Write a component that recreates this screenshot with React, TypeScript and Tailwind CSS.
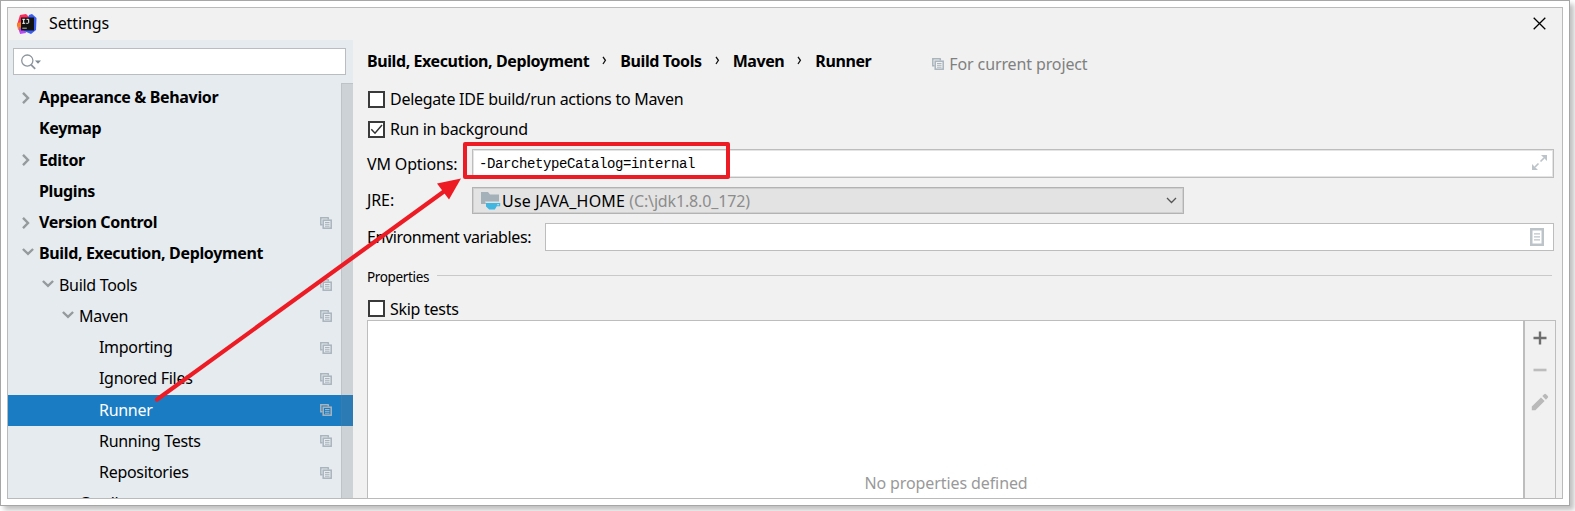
import React from "react";

const CopyIcon = ({ className = "" }: { className?: string }) => (
  <svg width="12" height="12" viewBox="0 0 12 12" className={`shrink-0 ${className}`}>
    <path d="M.8 8.4V.8h8M.8 7.8h1.7M8.3.8v1.7" fill="none" stroke="#a9b4bc" strokeWidth="1.5" />
    <rect x="3.2" y="3.2" width="8" height="8" fill="none" stroke="#a9b4bc" strokeWidth="1.5" />
    <path d="M5 5.5h4.5M5 7.3h4.5M5 9.2h4.5" stroke="#a9b4bc" strokeWidth="1" />
  </svg>
);

const Chevron = ({ open }: { open: boolean }) =>
  open ? (
    <svg width="12" height="8" viewBox="0 0 12 8" className="-mt-1">
      <path d="M.9 1l5.1 4.9L11.1 1" fill="none" stroke="#959a9d" strokeWidth="2.4" />
    </svg>
  ) : (
    <svg width="8" height="12" viewBox="0 0 8 12" className="-mt-px">
      <path d="M1 .9L6 6l-5 5.1" fill="none" stroke="#959a9d" strokeWidth="2.4" />
    </svg>
  );

type Row = { label: string; pad: string; bold?: boolean; open?: boolean; icon?: boolean; selected?: boolean };

const rows: Row[] = [
  { label: "Appearance & Behavior", pad: "pl-[14px]", bold: true, open: false },
  { label: "Keymap", pad: "pl-[14px]", bold: true },
  { label: "Editor", pad: "pl-[14px]", bold: true, open: false },
  { label: "Plugins", pad: "pl-[14px]", bold: true },
  { label: "Version Control", pad: "pl-[14px]", bold: true, open: false, icon: true },
  { label: "Build, Execution, Deployment", pad: "pl-[14px]", bold: true, open: true },
  { label: "Build Tools", pad: "pl-[34px]", open: true, icon: true },
  { label: "Maven", pad: "pl-[54px]", open: true, icon: true },
  { label: "Importing", pad: "pl-[74px]", icon: true },
  { label: "Ignored Files", pad: "pl-[74px]", icon: true },
  { label: "Runner", pad: "pl-[74px]", icon: true, selected: true },
  { label: "Running Tests", pad: "pl-[74px]", icon: true },
  { label: "Repositories", pad: "pl-[74px]", icon: true },
  { label: "Gradle", pad: "pl-[54px]", icon: true },
];

const Checkbox = ({ checked, label }: { checked?: boolean; label: string }) => (
  <label className="flex items-center gap-[5px] tracking-[-0.28px]">
    <span className="h-[17px] w-[17px] border-2 border-[#3a3a3a] bg-white">
      {checked && (
        <svg width="13" height="13" viewBox="0 0 13 13">
          <path d="M1.3 6.3l3.7 3.9 7-8.2" fill="none" stroke="#333" strokeWidth="1.5" />
        </svg>
      )}
    </span>
    <span>{label}</span>
  </label>
);

const Logo = () => (
  <svg width="20" height="20" viewBox="0 0 20 20">
    <path d="M3 1l6-1 4 4-2 11-8 4-3-8z" fill="#fc2d5d" />
    <path d="M0 9l5-1v6l-4 2z" fill="#fc801d" />
    <path d="M2 13l6 2 1 4-6 1z" fill="#b74af7" />
    <path d="M12 1l3-1 4.5 4-.5 12-5 4-7-3z" fill="#3b5cf0" />
    <rect x="4" y="3.5" width="13" height="13" fill="#111" />
    <path d="M5.3 5.3h2.9M6.7 5.3v4M5.3 9.3h2.9M9.5 5.3h2.2v3.2q0 .8-.9.8H9.3" fill="none" stroke="#fff" strokeWidth="1" />
    <path d="M5.3 14.2h4.5" stroke="#bbb" strokeWidth="1" />
  </svg>
);

const Sep = () => (
  <span className="mx-[13px] flex w-[5px]">
    <svg width="5" height="9" viewBox="0 0 5 9">
      <path d="M1 .8l2.4 3.5L1 8" fill="none" stroke="#111" strokeWidth="1.3" />
    </svg>
  </span>
);

export default function App() {
  return (
    <div className="relative h-[511px] w-[1575px] overflow-hidden bg-white font-['Noto_Sans',sans-serif] text-[16px] leading-5 text-black">
      <div className="h-[506px] w-[1570px] border border-[#a6a6a6] bg-white p-[6px] shadow-[4px_4px_5px_rgba(0,0,0,0.25)]">
        <div className="flex h-full flex-col overflow-hidden border border-[#bababa] bg-[#f1f1f1]">
          <header className="flex h-8 shrink-0 items-center pl-[9px] pr-4">
            <Logo />
            <h1 className="-mt-0.5 ml-3 flex-1 tracking-[-0.1px]">Settings</h1>
            <svg width="13" height="13" viewBox="0 0 13 13" className="-mt-0.5">
              <path d="M.7.7l11.6 11.6M12.3.7L.7 12.3" stroke="#000" strokeWidth="1.3" />
            </svg>
          </header>
          <div className="flex min-h-0 flex-1">
            <aside className="flex w-[345px] shrink-0 flex-col bg-[#e6ebef]">
              <div className="ml-[5px] mt-2 flex h-[27px] w-[333px] shrink-0 items-center border border-[#b9bdc0] bg-white pl-[7px]">
                <svg width="20" height="16" viewBox="0 0 20 16">
                  <circle cx="6.3" cy="6.6" r="5.6" fill="none" stroke="#8b959b" strokeWidth="1.3" />
                  <path d="M10.2 10.8l4 4" stroke="#8b959b" strokeWidth="1.8" />
                  <path d="M14 6.5h6l-3 3.2z" fill="#7f8b91" />
                </svg>
              </div>
              <div className="relative mt-[7.5px] min-h-0 flex-1 overflow-hidden">
                {rows.map((r) => (
                  <div
                    key={r.label}
                    className={`flex h-[31.25px] items-center ${r.pad} ${r.selected ? "bg-[#1a7dc4] text-white" : ""} ${r.bold ? "font-bold tracking-[-0.35px]" : "tracking-[-0.3px]"}`}
                  >
                    <span className="flex w-[17px] shrink-0">{r.open !== undefined && <Chevron open={r.open} />}</span>
                    <span className="-mt-0.5 flex-1 whitespace-nowrap">{r.label}</span>
                    {r.icon && <CopyIcon className="-mt-px mr-[21px]" />}
                  </div>
                ))}
                <div className="absolute right-0 top-[.5px] h-full w-3 border-l border-t border-[#80848a30] bg-[#73757c36]" />
              </div>
            </aside>
            <main className="flex min-w-0 flex-1 flex-col pl-[14px] pr-[6px]">
              <div className="-mt-px flex h-[43px] shrink-0 items-center font-bold tracking-[-0.41px]">
                <span>Build, Execution, Deployment</span>
                <Sep />
                <span>Build Tools</span>
                <Sep />
                <span>Maven</span>
                <Sep />
                <span>Runner</span>
                <span className="ml-[61px] mt-[7px] flex items-center gap-[5px] font-normal tracking-[-0.12px] text-[#808080]">
                  <CopyIcon />
                  <span>For current project</span>
                </span>
              </div>
              <div className="flex h-[34px] shrink-0 items-center pl-px">
                <Checkbox label="Delegate IDE build/run actions to Maven" />
              </div>
              <div className="flex h-[26px] shrink-0 items-center pl-px">
                <Checkbox checked label="Run in background" />
              </div>
              <div className="mt-[7px] flex h-[29px] shrink-0 items-center pr-0.5">
                <span className="w-[105px] tracking-[-0.15px]">VM Options:</span>
                <div className="flex h-[29px] flex-1 items-center justify-between border border-[#bdbdbd] bg-white px-[6px] shadow-[inset_0_0_0_1px_#e4e4e4]">
                  <span className="font-['Liberation_Mono',monospace] text-[14px] tracking-[-0.4px]">-DarchetypeCatalog=internal</span>
                  <svg width="15" height="15" viewBox="0 0 15 15" className="-mt-0.5">
                    <path d="M9 0h6v6zM0 9v6h6z" fill="#bcc4c9" />
                    <path d="M12 3L8.5 6.5M3 12l3.5-3.5" stroke="#bcc4c9" strokeWidth="1.7" />
                  </svg>
                </div>
              </div>
              <div className="mt-[9px] flex h-[27px] shrink-0 items-center">
                <span className="-mt-0.5 w-[105px] tracking-[-0.1px]">JRE:</span>
                <div className="flex h-[27px] w-[712px] items-center border border-[#b3b3b3] bg-[#e3e3e3] pl-2 pr-[6px] shadow-[inset_0_0_0_1px_#d0d0d0]">
                  <svg width="20" height="18" viewBox="0 0 20 18">
                    <path d="M0 0h7l2 2.5h9V12H0z" fill="#a4b1b9" />
                    <path d="M4 9.5h15.5V15L16 18H8z" fill="#e3e3e3" />
                    <path d="M5 11h14.2v3.2h-3.4l-2 3.3H8.2L5 14.5z" fill="#40b6e0" />
                    <path d="M16.2 12.2h1.8v1h-1.8z" fill="#e3e3e3" />
                  </svg>
                  <span className="ml-px flex-1">
                    <span className="tracking-[0.2px]">Use JAVA_HOME</span>{" "}
                    <span className="tracking-[-0.15px] text-[#8c8c8c]">(C:\jdk1.8.0_172)</span>
                  </span>
                  <svg width="11" height="7" viewBox="0 0 11 7">
                    <path d="M1 1l4.5 4.5L10 1" fill="none" stroke="#555" strokeWidth="1.3" />
                  </svg>
                </div>
              </div>
              <div className="mt-[9px] flex h-[28px] shrink-0 items-center pr-0.5">
                <span className="w-[178px] tracking-[-0.38px]">Environment variables:</span>
                <div className="flex h-[28px] flex-1 items-center justify-end border border-[#bdbdbd] bg-white pr-[9px]">
                  <svg width="14" height="18" viewBox="0 0 14 18">
                    <rect x="1.25" y="1.25" width="11.5" height="15.5" fill="none" stroke="#bcc4c9" strokeWidth="2.5" />
                    <path d="M4 5.8h6M4 8.8h6M4 11.8h6" stroke="#bcc4c9" strokeWidth="1.2" />
                  </svg>
                </div>
              </div>
              <div className="mt-[12px] flex h-6 shrink-0 items-center gap-2 pr-1 text-[13.5px] tracking-[-0.35px]">
                <span className="mt-1">Properties</span>
                <div className="h-px flex-1 bg-[#c9c9c9]" />
              </div>
              <div className="mt-[10px] flex h-[23px] shrink-0 items-center pl-px">
                <Checkbox label="Skip tests" />
              </div>
              <div className="flex min-h-0 w-[1189px] flex-1 border-x border-t border-[#bdbdbd]">
                <div className="flex flex-1 flex-col items-center bg-white pt-[152px] text-[#999]">
                  <span className="ml-px tracking-[-0.1px]">No properties defined</span>
                </div>
                <div className="flex w-8 flex-col items-center border-l-2 border-[#bdbdbd] pt-[10px]">
                  <svg width="14" height="14" viewBox="0 0 14 14">
                    <path d="M7 .5v13M.5 7h13" stroke="#6e6e6e" strokeWidth="2.4" />
                  </svg>
                  <svg width="14" height="14" viewBox="0 0 14 14" className="mt-[18px]">
                    <path d="M.5 7h13" stroke="#bdbdbd" strokeWidth="2.6" />
                  </svg>
                  <svg width="18" height="18" viewBox="0 0 18 18" className="mt-4">
                    <path d="M.8 17.2v-3.6L10 4.4 13.6 8l-9.2 9.2zM11.3 3.1l1.9-1.9q.9-.8 1.8 0l1.8 1.8q.8.9 0 1.8l-1.9 1.9z" fill="#b9b9b9" />
                  </svg>
                </div>
              </div>
            </main>
          </div>
        </div>
      </div>
      <div className="pointer-events-none absolute left-[463px] top-[142px] h-[37px] w-[267px] rounded-[2px] border-4 border-[#ed1c24]" />
      <svg width="320" height="240" viewBox="150 170 320 240" className="pointer-events-none absolute left-[150px] top-[170px]">
        <path d="M157 399.5L446 190" stroke="#ed1c24" strokeWidth="4.2" strokeLinecap="round" />
        <path d="M461 178.5L437 183.5 449 199.5z" fill="#ed1c24" />
      </svg>
    </div>
  );
}
